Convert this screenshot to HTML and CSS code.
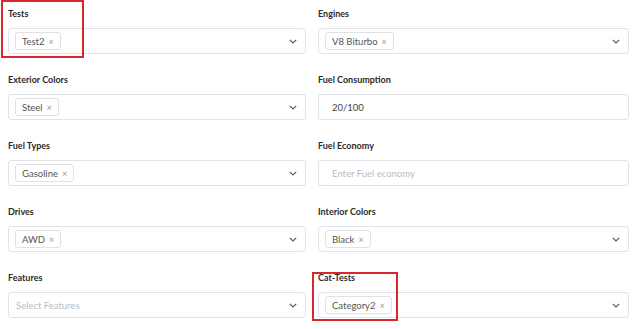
FILE: index.html
```html
<!DOCTYPE html>
<html lang="en">
<head>
    <meta charset="UTF-8">
    <meta name="viewport" content="width=device-width, initial-scale=1.0">
    <title>Vehicle attributes</title>
    <link rel="stylesheet" href="styles.css">
</head>
<body>
    <div class="form-grid">
        <div class="field">
            <label>Tests</label>
            <div class="select">
                <span class="tag">Test2 <span class="remove">×</span></span>
                <svg class="chevron" viewBox="0 0 8 5"><path d="M0.8 0.8 L4 4 L7.2 0.8"/></svg>
            </div>
        </div>
        <div class="field">
            <label>Engines</label>
            <div class="select">
                <span class="tag">V8 Biturbo <span class="remove">×</span></span>
                <svg class="chevron" viewBox="0 0 8 5"><path d="M0.8 0.8 L4 4 L7.2 0.8"/></svg>
            </div>
        </div>
        <div class="field">
            <label>Exterior Colors</label>
            <div class="select">
                <span class="tag">Steel <span class="remove">×</span></span>
                <svg class="chevron" viewBox="0 0 8 5"><path d="M0.8 0.8 L4 4 L7.2 0.8"/></svg>
            </div>
        </div>
        <div class="field">
            <label>Fuel Consumption</label>
            <div class="input">20/100</div>
        </div>
        <div class="field">
            <label>Fuel Types</label>
            <div class="select">
                <span class="tag">Gasoline <span class="remove">×</span></span>
                <svg class="chevron" viewBox="0 0 8 5"><path d="M0.8 0.8 L4 4 L7.2 0.8"/></svg>
            </div>
        </div>
        <div class="field">
            <label>Fuel Economy</label>
            <div class="input placeholder">Enter Fuel economy</div>
        </div>
        <div class="field">
            <label>Drives</label>
            <div class="select">
                <span class="tag">AWD <span class="remove">×</span></span>
                <svg class="chevron" viewBox="0 0 8 5"><path d="M0.8 0.8 L4 4 L7.2 0.8"/></svg>
            </div>
        </div>
        <div class="field">
            <label>Interior Colors</label>
            <div class="select">
                <span class="tag">Black <span class="remove">×</span></span>
                <svg class="chevron" viewBox="0 0 8 5"><path d="M0.8 0.8 L4 4 L7.2 0.8"/></svg>
            </div>
        </div>
        <div class="field">
            <label>Features</label>
            <div class="select">
                <span class="placeholder">Select Features</span>
                <svg class="chevron" viewBox="0 0 8 5"><path d="M0.8 0.8 L4 4 L7.2 0.8"/></svg>
            </div>
        </div>
        <div class="field">
            <label>Cat-Tests</label>
            <div class="select">
                <span class="tag">Category2 <span class="remove">×</span></span>
                <svg class="chevron" viewBox="0 0 8 5"><path d="M0.8 0.8 L4 4 L7.2 0.8"/></svg>
            </div>
        </div>
    </div>

    <div class="highlight highlight-tests"></div>
    <div class="highlight highlight-cats"></div>
</body>
</html>
```

FILE: styles.css
```css
body {
    font-family: 'Lato', sans-serif;
    margin: 0;
    background-color: white;
    color: #333;
}
.form-grid {
    display: grid;
    grid-template-columns: 298px 311px;
    column-gap: 12px;
    padding: 7px 11px 0 8px;
}
.field {
    margin-bottom: 19px;
}
label {
    display: block;
    height: 14px;
    line-height: 14px;
    margin-bottom: 7px;
    font-size: 9px;
    font-weight: 700;
    color: #2b2b2b;
}
.select,
.input {
    box-sizing: border-box;
    height: 26px;
    border: 1px solid #e1e3e6;
    border-radius: 3px;
    display: flex;
    align-items: center;
    font-size: 9.5px;
    color: #444;
}
.select {
    padding: 0 8px 0 6px;
}
.input {
    padding: 0 13px;
}
.tag {
    box-sizing: border-box;
    height: 18px;
    display: inline-flex;
    align-items: center;
    padding: 0 6px;
    border: 1px solid #dfe1e4;
    border-radius: 3px;
    color: #555;
}
.remove {
    margin-left: 4px;
    color: #9a9a9a;
    font-size: 9px;
}
.placeholder {
    color: #b9bcc0;
}
.select .placeholder {
    padding-left: 1px;
}
.chevron {
    margin-left: auto;
    width: 8px;
    height: 5px;
    fill: none;
    stroke: #555;
    stroke-width: 1.1;
}
.highlight {
    position: absolute;
    border: 2px solid #d9272e;
}
.highlight-tests {
    left: 1px;
    top: 0;
    width: 79px;
    height: 54px;
}
.highlight-cats {
    left: 312px;
    top: 272px;
    width: 82px;
    height: 45px;
}
```
